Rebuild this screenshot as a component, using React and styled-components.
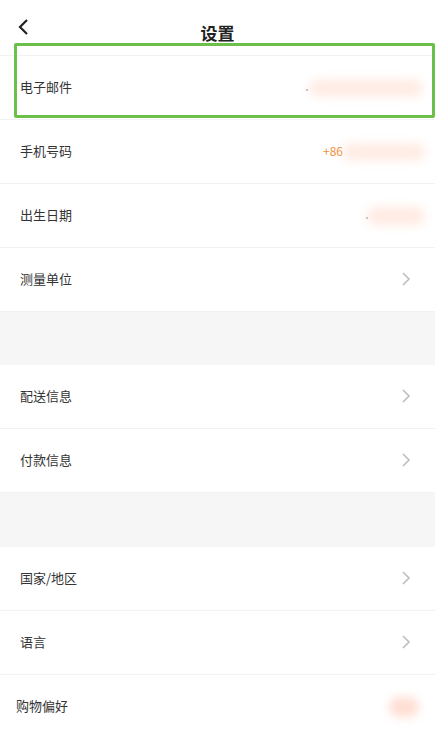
import React from "react";
import styled, { createGlobalStyle } from "styled-components";

const GlobalStyle = createGlobalStyle`
  body {
    margin: 0;
    background: #fff;
    font-family: "Noto Sans CJK SC", "Noto Sans", sans-serif;
  }
`;

const Page = styled.div`
  width: 435px;
  position: relative;
  background: #fff;
`;

const Header = styled.div`
  height: 56px;
  position: relative;
  display: flex;
  align-items: flex-start;
  justify-content: center;
  border-bottom: 1px solid #f2f2f2;
  box-sizing: border-box;
`;

const BackButton = styled.div`
  position: absolute;
  left: 17px;
  top: 17px;
  width: 14px;
  height: 20px;
`;

const Title = styled.h1`
  margin: 21px 0 0;
  font-size: 17px;
  font-weight: 600;
  color: #222;
  line-height: 24px;
`;

const Highlight = styled.div`
  position: absolute;
  left: 14px;
  top: 43px;
  width: 421px;
  height: 75px;
  border: 3px solid #6cc04a;
  border-radius: 2px;
  box-sizing: border-box;
  pointer-events: none;
`;

const Row = styled.div`
  height: 64px;
  display: flex;
  align-items: center;
  padding: 0 24px 2px ${(p) => p.$indent || 20}px;
  border-bottom: 1px solid #f2f2f2;
  box-sizing: border-box;
  position: relative;
`;

const Label = styled.span`
  flex: 1;
  font-size: 13px;
  line-height: 18px;
  color: #333;
`;

const Gap = styled.div`
  height: ${(p) => p.$h}px;
  background: #f6f6f6;
`;

const Blur = styled.div`
  position: absolute;
  right: ${(p) => p.$right}px;
  top: 50%;
  width: ${(p) => p.$w}px;
  height: ${(p) => p.$h || 16}px;
  margin-top: -${(p) => (p.$h || 16) / 2}px;
  border-radius: 10px;
  background: ${(p) => p.$color || "rgba(255, 218, 202, 0.5)"};
  filter: blur(5px);
`;

const Dot = styled.span`
  position: absolute;
  left: ${(p) => p.$x}px;
  top: 50%;
  width: 2px;
  height: 2px;
  margin-top: 1px;
  background: #aaa;
  border-radius: 1px;
`;

const Phone = styled.span`
  position: absolute;
  left: 323px;
  font-size: 12px;
  color: #f0903a;
`;

const Chevron = () => (
  <svg width="10" height="16" viewBox="0 0 10 16">
    <path d="M2 2 L8 8 L2 14" fill="none" stroke="#bdbdbd" strokeWidth="1.6" />
  </svg>
);

export default function App() {
  return (
    <Page>
      <GlobalStyle />
      <Header>
        <BackButton>
          <svg width="14" height="20" viewBox="0 0 14 20">
            <path d="M10 3 L3 10 L10 17" fill="none" stroke="#222" strokeWidth="2.2" />
          </svg>
        </BackButton>
        <Title>设置</Title>
      </Header>
      <Row>
        <Label>电子邮件</Label>
        <Dot $x={306} />
        <Blur $right={12} $w={114} $h={18} />
      </Row>
      <Row>
        <Label>手机号码</Label>
        <Phone>+86</Phone>
        <Blur $right={10} $w={82} $h={18} />
      </Row>
      <Row>
        <Label>出生日期</Label>
        <Dot $x={366} />
        <Blur $right={10} $w={58} $h={20} />
      </Row>
      <Row>
        <Label>测量单位</Label>
        <Chevron />
      </Row>
      <Gap $h={53} />
      <Row>
        <Label>配送信息</Label>
        <Chevron />
      </Row>
      <Row>
        <Label>付款信息</Label>
        <Chevron />
      </Row>
      <Gap $h={54} />
      <Row>
        <Label>国家/地区</Label>
        <Chevron />
      </Row>
      <Row>
        <Label>语言</Label>
        <Chevron />
      </Row>
      <Row $indent={16}>
        <Label>购物偏好</Label>
        <Blur $right={16} $w={30} $h={20} $color="rgba(255, 195, 175, 0.55)" />
      </Row>
      <Highlight />
    </Page>
  );
}
